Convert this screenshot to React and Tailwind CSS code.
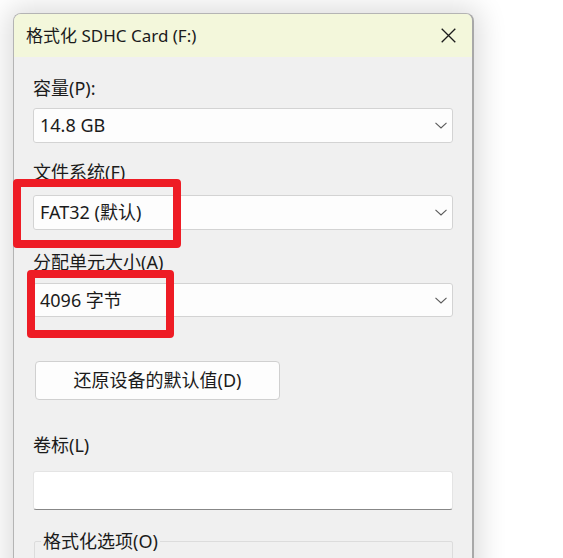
import React from "react";

const font = { fontFamily: '"Noto Sans", "Noto Sans CJK SC", sans-serif' };

const Chevron = () => (
  <svg width="12" height="7" viewBox="0 0 12 7" fill="none">
    <path d="M0.5 0.8 L6 6 L11.5 0.8" stroke="#5a5a5a" strokeWidth="1.1" />
  </svg>
);

const Select = ({ value, h = "h-[35px]", mt }) => (
  <div
    className={`${mt} ${h} flex items-center justify-between bg-[#fdfdfd] border border-[#d3d3d3] rounded-[3px] pl-[6px] pr-[5px]`}
  >
    <span className="text-[18px] text-[#1b1b1b]">{value}</span>
    <Chevron />
  </div>
);

const Label = ({ children, mt }) => (
  <div className={`${mt} h-[24px] leading-[24px] text-[18px] text-[#1b1b1b]`}>{children}</div>
);

const App = () => {
  return (
    <div className="w-[563px] h-[558px] bg-white overflow-hidden relative pl-[13px] pt-[13px]" style={font}>
      <div className="w-[461px] h-[600px] bg-[#f0f0f0] border border-[#b4b4b4] border-r-2 border-r-[#a8a8a8] rounded-t-[8px] overflow-hidden shadow-[0_0_28px_6px_rgba(0,0,0,0.14)]">
        {/* title bar */}
        <div className="h-[43px] bg-[#f3f7db] flex items-center justify-between pl-[12px] pr-[16px]">
          <span className="text-[17px] text-[#1b1b1b]">格式化 SDHC Card (F:)</span>
          <svg width="15" height="15" viewBox="0 0 15 15">
            <path d="M0.7 0.7 L14.3 14.3 M14.3 0.7 L0.7 14.3" stroke="#1b1b1b" strokeWidth="1.3" />
          </svg>
        </div>

        <div className="px-[19px] flex flex-col">
          <Label mt="mt-[19px]">容量(P):</Label>
          <Select mt="mt-[8px]" value="14.8 GB" />

          <Label mt="mt-[17px]">文件系统(F)</Label>
          <Select mt="mt-[11px]" value="FAT32 (默认)" />

          <Label mt="mt-[20px]">分配单元大小(A)</Label>
          <Select mt="mt-[9px]" h="h-[34px]" value="4096 字节" />

          <button className="mt-[44px] ml-[2px] w-[245px] h-[39px] bg-[#fdfdfd] border border-[#d0d0d0] rounded-[4px] text-[18px] text-[#1b1b1b]">
            还原设备的默认值(D)
          </button>

          <Label mt="mt-[33px]">卷标(L)</Label>
          <div className="mt-[14px] h-[39px] bg-white border border-[#e4e4e4] border-b-[#878787] rounded-[3px]"></div>

          <fieldset className="mt-[19px] ml-[1px] h-[80px] border border-[#dcdcdc] rounded-[2px] px-[6px]">
            <legend className="px-[2px] h-[24px] leading-[24px] text-[18px] text-[#1b1b1b]">格式化选项(O)</legend>
          </fieldset>
        </div>
      </div>

      {/* red annotation boxes */}
      <div className="absolute left-[13px] top-[179px] w-[168px] h-[69px] border-[8px] border-[#ee1c25] rounded-[4px]"></div>
      <div className="absolute left-[27px] top-[270px] w-[147px] h-[68px] border-[8px] border-[#ee1c25] rounded-[4px]"></div>
    </div>
  );
};

export default App;
